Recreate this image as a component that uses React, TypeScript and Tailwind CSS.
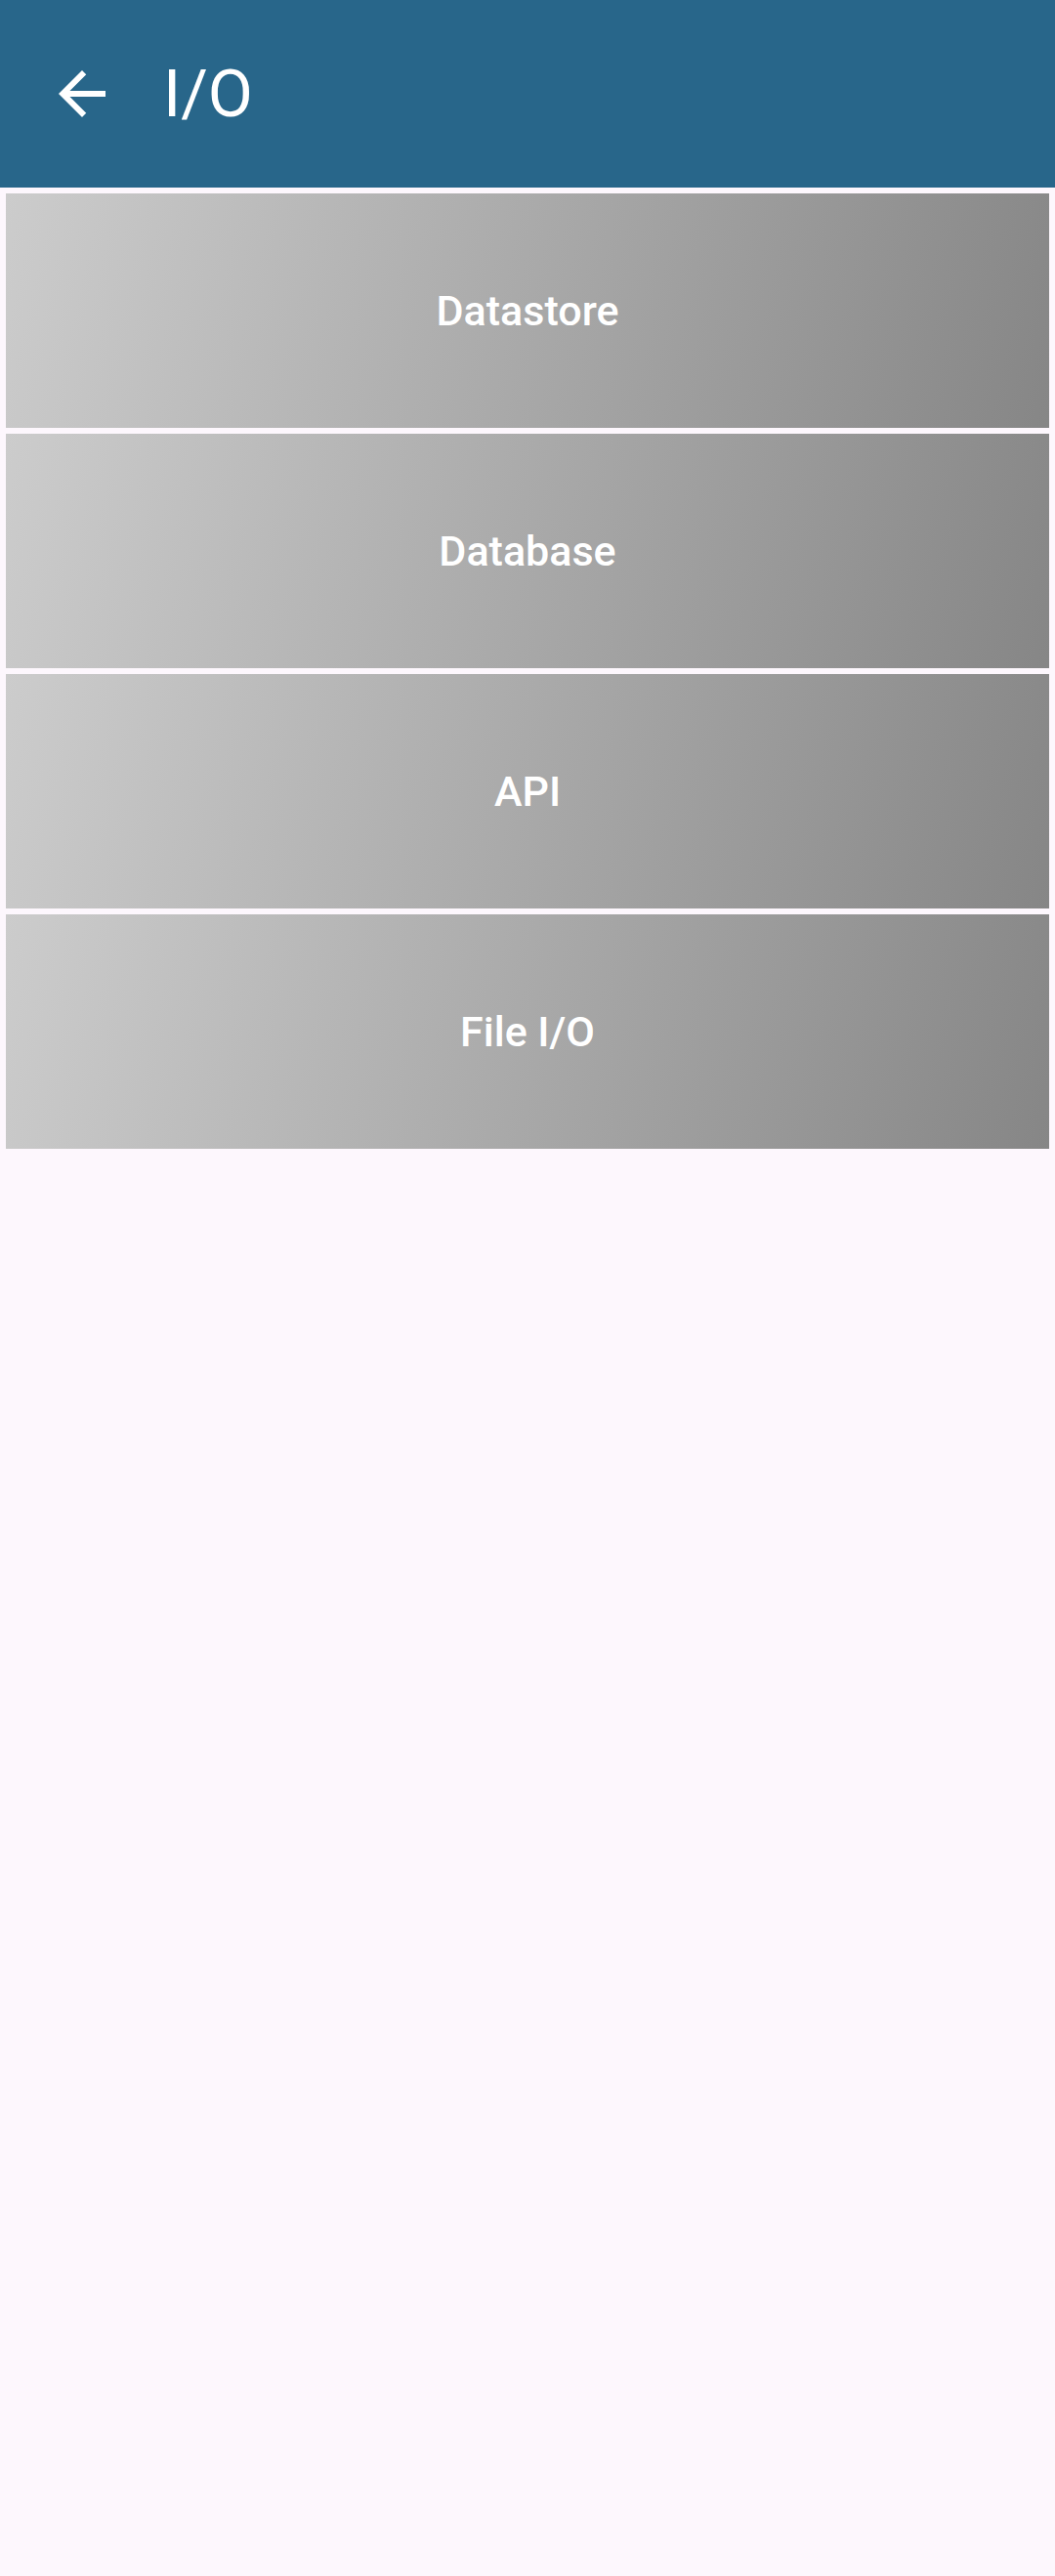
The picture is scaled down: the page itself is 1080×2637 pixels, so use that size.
const items = ["Datastore", "Database", "API", "File I/O"];

export default function App() {
  return (
    <div
      className="min-h-[2637px] w-full bg-[#fdf7fd]"
      style={{ fontFamily: "Roboto, 'Noto Sans', sans-serif" }}
    >
      {/* Top app bar */}
      <header className="flex h-[192px] items-center bg-[#28668a] text-white">
        <button className="ml-[48px] flex h-[72px] w-[72px] items-center justify-center" aria-label="Back">
          <svg viewBox="0 0 24 24" className="h-[72px] w-[72px]" fill="currentColor">
            <path d="M20 11H7.83l5.59-5.59L12 4l-8 8 8 8 1.41-1.41L7.83 13H20v-2z" />
          </svg>
        </button>
        <h1 className="ml-[47px] text-[67px] font-normal leading-none">I/O</h1>
      </header>

      {/* Category list */}
      <div className="flex flex-col gap-[6px] px-[6px] pt-[6px]">
        {items.map((label) => (
          <button
            key={label}
            className="flex h-[240px] w-full items-center justify-center bg-linear-[103deg] from-[#cccccc] to-[#868686] text-[43px] font-medium text-white"
          >
            {label}
          </button>
        ))}
      </div>
    </div>
  );
}
